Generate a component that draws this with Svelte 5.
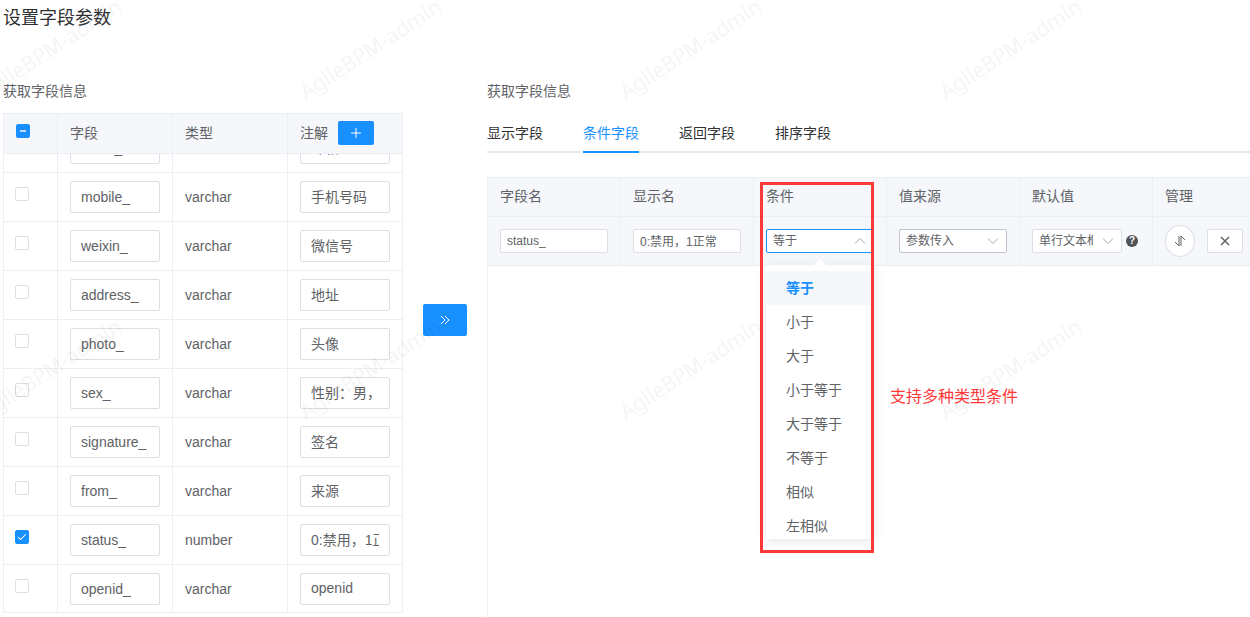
<script>
    import { onMount } from 'svelte';

    let fields = $state([
        { name: 'email_', type: 'varchar', comment: '邮箱', checked: false },
        { name: 'mobile_', type: 'varchar', comment: '手机号码', checked: false },
        { name: 'weixin_', type: 'varchar', comment: '微信号', checked: false },
        { name: 'address_', type: 'varchar', comment: '地址', checked: false },
        { name: 'photo_', type: 'varchar', comment: '头像', checked: false },
        { name: 'sex_', type: 'varchar', comment: '性别：男，女，未知', checked: false },
        { name: 'signature_', type: 'varchar', comment: '签名', checked: false },
        { name: 'from_', type: 'varchar', comment: '来源', checked: false },
        { name: 'status_', type: 'number', comment: '0:禁用，1正常', checked: true },
        { name: 'openid_', type: 'varchar', comment: 'openid', checked: false }
    ]);
    let tabs = ['显示字段', '条件字段', '返回字段', '排序字段'];
    let conditions = ['等于', '小于', '大于', '小于等于', '大于等于', '不等于', '相似', '左相似'];

    let activeTab = $state('条件字段');
    let open = $state(true);
    let row = $state({ name: 'status_', label: '0:禁用，1正常', condition: '等于' });

    let all = $derived(fields.every((f) => f.checked));
    let some = $derived(fields.some((f) => f.checked) && !all);

    let body;

    function toggleAll() {
        const value = !all;
        fields.forEach((f) => (f.checked = value));
    }
    function choose(c) {
        row.condition = c;
        open = false;
    }
    onMount(() => {
        // start at the end of the field list
        body.scrollTop = body.scrollHeight;
    });
</script>

{#snippet chevron(up)}
    <svg class="chevron" class:up viewBox="0 0 12 12" aria-hidden="true"><path d="M1 3.5 6 8.5 11 3.5" /></svg>
{/snippet}

<div class="page">
    <h1>设置字段参数</h1>
    <div class="panels">
        <section class="source">
            <h2>获取字段信息</h2>
            <div class="field-table">
                <table>
                    <colgroup><col class="c-check" /><col /><col /><col /></colgroup>
                    <thead>
                        <tr>
                            <th class="check"><input type="checkbox" aria-label="全选" checked={all} indeterminate={some} onchange={toggleAll} /></th>
                            <th>字段</th>
                            <th>类型</th>
                            <th>
                                <div class="with-btn">
                                    注解
                                    <button class="primary small" aria-label="添加">
                                        <svg width="12" height="12" viewBox="0 0 12 12"><path d="M6 1v10M1 6h10" /></svg>
                                    </button>
                                </div>
                            </th>
                        </tr>
                    </thead>
                </table>
                <div class="scroll" bind:this={body}>
                    <table>
                        <colgroup><col class="c-check" /><col /><col /><col /></colgroup>
                        <tbody>
                            {#each fields as f}
                                <tr>
                                    <td class="check"><input type="checkbox" aria-label={f.name} bind:checked={f.checked} /></td>
                                    <td><input class="text" aria-label="字段" bind:value={f.name} /></td>
                                    <td>{f.type}</td>
                                    <td><input class="text zh" aria-label="注解" bind:value={f.comment} /></td>
                                </tr>
                            {/each}
                        </tbody>
                    </table>
                </div>
            </div>
        </section>

        <button class="primary move" aria-label="添加到右侧">
            <svg width="12" height="12" viewBox="0 0 12 12"><path d="M2 2l4 4-4 4M6 2l4 4-4 4" /></svg>
        </button>

        <section class="target">
            <h2>获取字段信息</h2>
            <div class="tabs" role="tablist">
                {#each tabs as t}
                    <button role="tab" aria-selected={t === activeTab} class:active={t === activeTab} onclick={() => (activeTab = t)}>{t}</button>
                {/each}
            </div>
            <div class="cond-table">
                <table>
                    <colgroup><col class="c-cond" /><col class="c-cond" /><col class="c-cond" /><col class="c-cond" /><col class="c-cond" /><col /></colgroup>
                    <thead>
                        <tr>
                            <th>字段名</th>
                            <th>显示名</th>
                            <th>条件</th>
                            <th>值来源</th>
                            <th>默认值</th>
                            <th>管理</th>
                        </tr>
                    </thead>
                    <tbody>
                        <tr>
                            <td><input class="text mini" aria-label="字段名" bind:value={row.name} /></td>
                            <td><input class="text mini zh" aria-label="显示名" bind:value={row.label} /></td>
                            <td>
                                <div class="select">
                                    <select
                                        aria-label="条件"
                                        class:focus={open}
                                        bind:value={row.condition}
                                        onmousedown={(e) => { e.preventDefault(); open = !open; }}
                                    >
                                        {#each conditions as c}<option>{c}</option>{/each}
                                    </select>
                                    {@render chevron(open)}
                                    {#if open}
                                        <div class="dropdown">
                                            <ul>
                                                {#each conditions as c}
                                                    <li><button class:selected={c === row.condition} onclick={() => choose(c)}>{c}</button></li>
                                                {/each}
                                            </ul>
                                        </div>
                                    {/if}
                                    <div class="mark"></div>
                                    <p class="note">支持多种类型条件</p>
                                </div>
                            </td>
                            <td>
                                <div class="select">
                                    <select class="hover" aria-label="值来源"><option>参数传入</option></select>
                                    {@render chevron(false)}
                                </div>
                            </td>
                            <td>
                                <div class="default">
                                    <div class="select">
                                        <select aria-label="默认值"><option>单行文本框</option></select>
                                        {@render chevron(false)}
                                    </div>
                                    <span class="help">?</span>
                                </div>
                            </td>
                            <td>
                                <div class="actions">
                                    <button class="plain round" aria-label="排序">
                                        <svg width="12" height="12" viewBox="0 0 12 12"><path d="M5 1v10L1 7M7 11V1l4 4" /></svg>
                                    </button>
                                    <button class="plain" aria-label="删除">
                                        <svg class="bold" width="12" height="12" viewBox="0 0 12 12"><path d="M2 2l8 8M10 2l-8 8" /></svg>
                                    </button>
                                </div>
                            </td>
                        </tr>
                    </tbody>
                </table>
            </div>
        </section>
    </div>

    <svg class="watermark" aria-hidden="true">
        <defs>
            <pattern id="wm" x="-20" y="-20" width="320" height="320" patternUnits="userSpaceOnUse">
                <text x="6" y="120" transform="rotate(-33 6 120)">AgileBPM-admin</text>
            </pattern>
        </defs>
        <rect width="100%" height="100%" fill="url(#wm)" />
    </svg>
</div>

<style>
    :global(body) { margin: 0; background: #fff; }
    .page {
        position: relative;
        display: flex;
        flex-direction: column;
        box-sizing: border-box;
        min-height: 100vh;
        padding-left: 3px;
        overflow: hidden;
        font-family: "Liberation Sans", Arial, "Noto Sans CJK SC", sans-serif;
        font-size: 14px;
        line-height: 20px;
        color: #606266;
    }
    h1 { margin: 0 0 44px; font-size: 18px; line-height: 36px; font-weight: normal; color: #303133; }
    h2 { margin: 0 0 11px; font-size: 14px; line-height: 22px; font-weight: normal; }
    .panels { flex: 1; display: flex; gap: 20px; align-items: flex-start; }
    .source { flex: 0 0 400px; }
    .target { flex: 1; min-width: 0; align-self: stretch; display: flex; flex-direction: column; }

    table { width: 100%; border-collapse: separate; border-spacing: 0; table-layout: fixed; }
    th, td {
        box-sizing: border-box;
        padding: 0 12px;
        border-right: 1px solid #ebeef5;
        border-bottom: 1px solid #ebeef5;
        text-align: left;
        font-weight: normal;
        vertical-align: middle;
    }
    th { height: 40px; padding-bottom: 2px; background: #f5f7fb; }
    td { height: 49px; }
    .c-check { width: 54px; }
    .c-cond { width: 133px; }
    .field-table { border: 1px solid #ebeef5; border-right: 0; border-bottom: 0; }
    .scroll { height: 459px; overflow: hidden; }
    .scroll tr:last-child td { height: 48px; padding-top: 1px; }
    .check { padding: 0 0 6px 11px; }
    th.check { padding-left: 12px; }
    .with-btn { display: flex; align-items: center; gap: 10px; }

    input, select, button { font: inherit; color: inherit; box-sizing: border-box; margin: 0; outline: none; }
    input[type='checkbox'] {
        appearance: none;
        display: block;
        position: relative;
        width: 14px;
        height: 14px;
        border: 1px solid #dcdfe6;
        border-radius: 2px;
        background: #fff;
    }
    input[type='checkbox']:checked, input[type='checkbox']:indeterminate { background: #1890ff; border-color: #1890ff; }
    input[type='checkbox']:checked::after {
        content: '';
        position: absolute;
        left: 4px;
        top: 1px;
        width: 3px;
        height: 7px;
        border: 1px solid #fff;
        border-left: 0;
        border-top: 0;
        box-sizing: content-box;
        transform: rotate(45deg);
    }
    input[type='checkbox']:indeterminate::after {
        content: '';
        position: absolute;
        left: 3px;
        top: 5px;
        width: 6px;
        height: 2px;
        background: #b9dcff;
    }
    .text { display: block; width: 100%; height: 32px; padding: 0 10px; border: 1px solid #dcdfe6; border-radius: 2px; background: #fff; }
    .mini { height: 24px; padding: 0 6px; font-size: 12px; }
    .zh { padding-bottom: 2px; }

    button { border: 0; padding: 0; background: none; cursor: pointer; }
    button svg { display: block; margin: auto; fill: none; stroke: currentColor; stroke-width: 1; }
    button svg.bold { stroke-width: 1.5; }
    .primary { background: #1890ff; color: #fff; border-radius: 2px; }
    .small { width: 36px; height: 24px; }
    .move { flex: none; width: 44px; height: 32px; margin-top: 224px; }
    .plain { width: 36px; height: 24px; border: 1px solid #dcdfe6; border-radius: 2px; background: #fff; }
    .plain.round { width: 30px; height: 32px; border-radius: 50%; }
    .actions { display: flex; align-items: center; gap: 12px; }

    .tabs { display: flex; gap: 40px; height: 40px; margin-bottom: 24px; box-shadow: inset 0 -2px #e4e7ed; color: #303133; }
    .tabs button { line-height: 40px; }
    .tabs .active { color: #1890ff; box-shadow: inset 0 -2px #1890ff, -3px 0 #fff; }

    .cond-table { flex: 1; border-left: 1px solid #ebeef5; }
    .cond-table th { height: 40px; border-top: 1px solid #ebeef5; }
    .cond-table td { background: #f5f7fb; }
    .cond-table th:last-child, .cond-table td:last-child { padding-right: 6px; border-right: 0; }

    .select { position: relative; flex: 1; font-size: 12px; }
    select {
        appearance: none;
        display: block;
        width: 100%;
        height: 24px;
        padding: 0 28px 0 6px;
        border: 1px solid #dcdfe6;
        border-radius: 2px;
        background: #fff;
    }
    select.hover { border-color: #c0c4cc; }
    select.focus { border-color: #1890ff; }
    .chevron { position: absolute; right: 8px; top: 6px; width: 12px; height: 12px; fill: none; stroke: #a4a8b0; pointer-events: none; }
    .chevron.up { transform: rotate(180deg); }
    .default { display: flex; align-items: center; gap: 4px; padding-right: 2px; }
    .help {
        width: 12px;
        height: 12px;
        border-radius: 50%;
        background: #505256;
        color: #fff;
        font-size: 10px;
        font-weight: bold;
        line-height: 12px;
        text-align: center;
    }

    .dropdown {
        position: absolute;
        z-index: 2;
        top: 36px;
        left: 0;
        right: 0;
        border-radius: 2px;
        background: #fff;
        box-shadow: 0 2px 12px rgba(0, 0, 0, 0.1);
        font-size: 14px;
    }
    .dropdown::before {
        content: '';
        position: absolute;
        top: -6px;
        left: 48px;
        border: 6px solid transparent;
        border-top: 0;
        border-bottom-color: #fff;
    }
    .dropdown ul { height: 274px; margin: 0; padding: 6px 0 0; box-sizing: border-box; list-style: none; overflow: hidden; }
    .dropdown li button { display: block; width: 100%; height: 34px; padding: 0 20px; text-align: left; }
    .dropdown li button.selected { background: #f5f7fb; color: #1890ff; font-weight: bold; }
    .mark { position: absolute; z-index: 3; left: -6px; right: 0; top: -47px; height: 371px; box-sizing: border-box; border: 3px solid #ff3838; pointer-events: none; }
    .note { position: absolute; z-index: 3; left: 124px; top: 156px; margin: 0; font-size: 16px; line-height: 24px; color: #ff3838; white-space: nowrap; }

    .watermark { position: absolute; z-index: 1; inset: 0; width: 100%; height: 100%; pointer-events: none; }
    .watermark text { font-family: "Noto Sans", sans-serif; font-size: 21px; fill: rgba(0, 0, 0, 0.04); }
</style>
